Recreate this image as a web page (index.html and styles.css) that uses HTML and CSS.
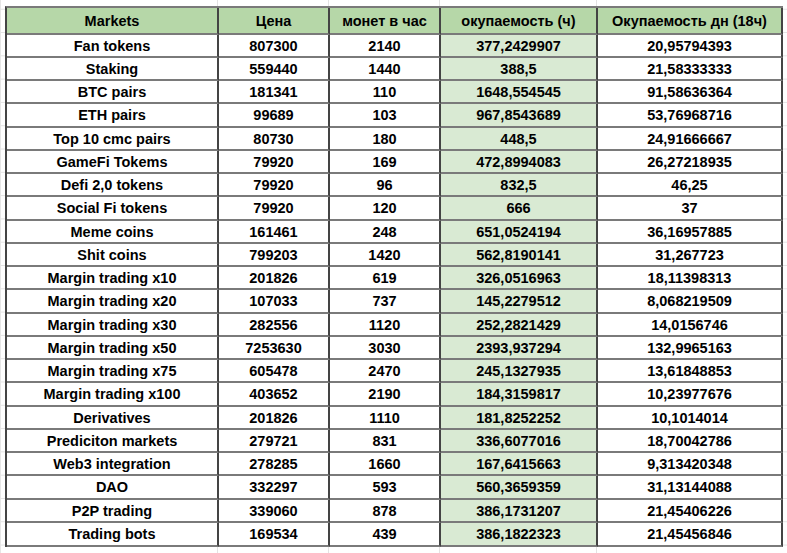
FILE: index.html
```html
<!DOCTYPE html>
<html lang="ru">
<head>
<meta charset="utf-8">
<title>Markets</title>
<link rel="stylesheet" href="styles.css">
</head>
<body>
<div class="sheet">
<table class="grid">
<colgroup>
<col class="c1"><col class="c2"><col class="c3"><col class="c4"><col class="c5">
</colgroup>
<thead>
<tr><th>Markets</th><th>Цена</th><th>монет в час</th><th>окупаемость (ч)</th><th>Окупаемость дн (18ч)</th></tr>
</thead>
<tbody>
<tr><td>Fan tokens</td><td>807300</td><td>2140</td><td class="hl">377,2429907</td><td>20,95794393</td></tr>
<tr><td>Staking</td><td>559440</td><td>1440</td><td class="hl">388,5</td><td>21,58333333</td></tr>
<tr><td>BTC pairs</td><td>181341</td><td>110</td><td class="hl">1648,554545</td><td>91,58636364</td></tr>
<tr><td>ETH pairs</td><td>99689</td><td>103</td><td class="hl">967,8543689</td><td>53,76968716</td></tr>
<tr><td>Top 10 cmc pairs</td><td>80730</td><td>180</td><td class="hl">448,5</td><td>24,91666667</td></tr>
<tr><td>GameFi Tokems</td><td>79920</td><td>169</td><td class="hl">472,8994083</td><td>26,27218935</td></tr>
<tr><td>Defi 2,0 tokens</td><td>79920</td><td>96</td><td class="hl">832,5</td><td>46,25</td></tr>
<tr><td>Social Fi tokens</td><td>79920</td><td>120</td><td class="hl">666</td><td>37</td></tr>
<tr><td>Meme coins</td><td>161461</td><td>248</td><td class="hl">651,0524194</td><td>36,16957885</td></tr>
<tr><td>Shit coins</td><td>799203</td><td>1420</td><td class="hl">562,8190141</td><td>31,267723</td></tr>
<tr><td>Margin trading x10</td><td>201826</td><td>619</td><td class="hl">326,0516963</td><td>18,11398313</td></tr>
<tr><td>Margin trading x20</td><td>107033</td><td>737</td><td class="hl">145,2279512</td><td>8,068219509</td></tr>
<tr><td>Margin trading x30</td><td>282556</td><td>1120</td><td class="hl">252,2821429</td><td>14,0156746</td></tr>
<tr><td>Margin trading x50</td><td>7253630</td><td>3030</td><td class="hl">2393,937294</td><td>132,9965163</td></tr>
<tr><td>Margin trading x75</td><td>605478</td><td>2470</td><td class="hl">245,1327935</td><td>13,61848853</td></tr>
<tr><td>Margin trading x100</td><td>403652</td><td>2190</td><td class="hl">184,3159817</td><td>10,23977676</td></tr>
<tr><td>Derivatives</td><td>201826</td><td>1110</td><td class="hl">181,8252252</td><td>10,1014014</td></tr>
<tr><td>Prediciton markets</td><td>279721</td><td>831</td><td class="hl">336,6077016</td><td>18,70042786</td></tr>
<tr><td>Web3 integration</td><td>278285</td><td>1660</td><td class="hl">167,6415663</td><td>9,313420348</td></tr>
<tr><td>DAO</td><td>332297</td><td>593</td><td class="hl">560,3659359</td><td>31,13144088</td></tr>
<tr><td>P2P trading</td><td>339060</td><td>878</td><td class="hl">386,1731207</td><td>21,45406226</td></tr>
<tr><td>Trading bots</td><td>169534</td><td>439</td><td class="hl">386,1822323</td><td>21,45456846</td></tr>
</tbody>
</table>
</div>
</body>
</html>
```
FILE: styles.css
```css
html, body {
  margin: 0;
  padding: 0;
}
body {
  width: 787px;
  height: 553px;
  overflow: hidden;
  background-color: #fff;
  background-image:
    linear-gradient(to right, #e6e6e6 0, #e6e6e6 1px, transparent 1px, transparent 217px, #e3e3e3 217px, #e3e3e3 218px, transparent 218px, transparent 328px, #e3e3e3 328px, #e3e3e3 329px, transparent 329px, transparent 439px, #e3e3e3 439px, #e3e3e3 440px, transparent 440px, transparent 596px, #e3e3e3 596px, #e3e3e3 597px, transparent 597px),
    linear-gradient(to bottom, transparent 0, transparent 9px, #e3e3e3 9px, #e3e3e3 10px, transparent 10px);
  background-size: 100% 100%, 100% 23.3px;
  background-repeat: no-repeat, repeat-y;
  background-position: 0 0, 0 0;
  font-family: "Liberation Sans", Arial, sans-serif;
}
.sheet {
  padding: 6px 0 0 5px;
}
.grid {
  border-collapse: separate;
  border-spacing: 0;
  table-layout: fixed;
  width: 778px;
  background: #fff;
  border-top: 2px solid #7a7a7a;
  border-left: 2px solid #444;
}
.c1 { width: 212px; }
.c2 { width: 111px; }
.c3 { width: 111px; }
.c4 { width: 157px; }
.c5 { width: 185px; }
.grid th,
.grid td {
  box-sizing: border-box;
  padding: 0 4px;
  text-align: center;
  vertical-align: middle;
  font-weight: bold;
  font-size: 14.5px;
  line-height: 16px;
  color: #000;
  white-space: nowrap;
  border-bottom: 2px solid #7a7a7a;
  border-right: 2px solid #444;
}
.grid thead tr {
  height: 27px;
}
.grid th {
  background: #b6d7a8;
}
.grid tbody tr {
  height: 23px;
}
.grid tbody tr:nth-child(4n),
.grid tbody tr:last-child {
  height: 24px;
}
.grid td.hl {
  background: #d9ead3;
}
```
